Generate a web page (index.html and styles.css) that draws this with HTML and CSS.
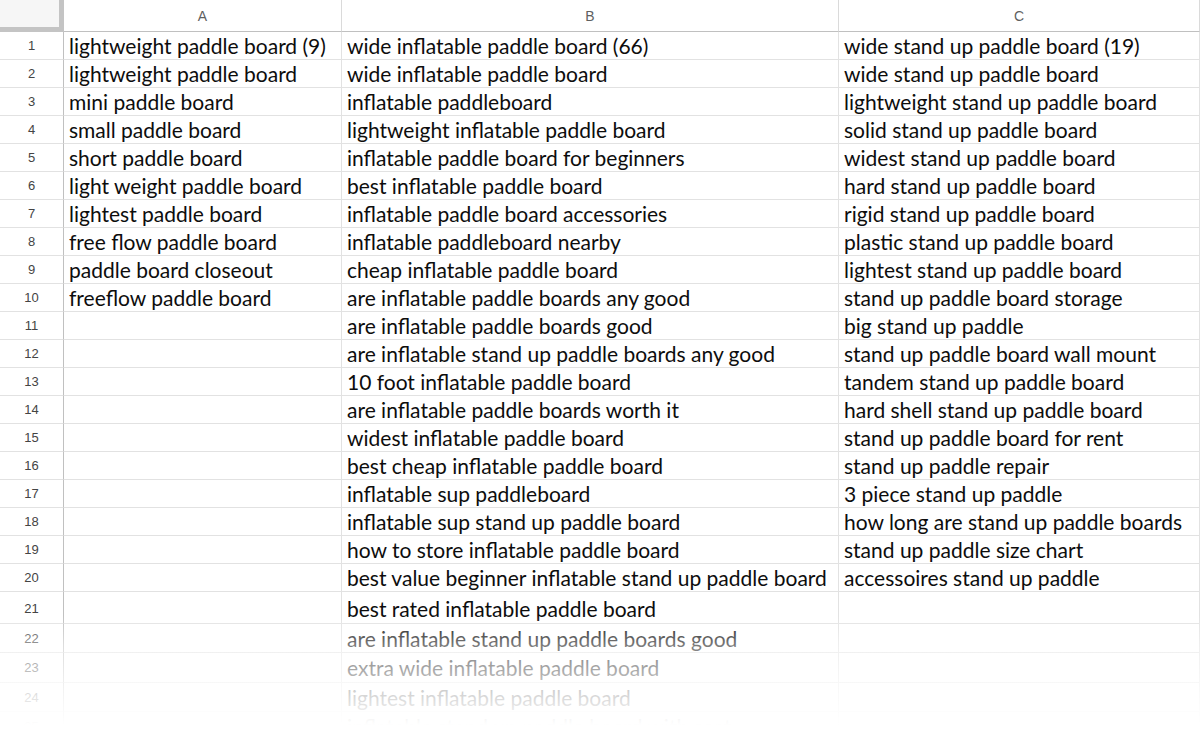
FILE: index.html
```html
<!DOCTYPE html>
<html>
<head>
<meta charset="utf-8">
<link rel="stylesheet" href="styles.css">
</head>
<body>
<div class="sheet">
<table class="grid">
<colgroup><col class="c-num"><col class="c-a"><col class="c-b"><col class="c-c"></colgroup>
<thead>
<tr class="head"><th class="corner"></th><th>A</th><th>B</th><th>C</th></tr>
</thead>
<tbody>
<tr><td class="num">1</td><td>lightweight paddle board (9)</td><td>wide inflatable paddle board (66)</td><td>wide stand up paddle board (19)</td></tr>
<tr><td class="num">2</td><td>lightweight paddle board</td><td>wide inflatable paddle board</td><td>wide stand up paddle board</td></tr>
<tr><td class="num">3</td><td>mini paddle board</td><td>inflatable paddleboard</td><td>lightweight stand up paddle board</td></tr>
<tr><td class="num">4</td><td>small paddle board</td><td>lightweight inflatable paddle board</td><td>solid stand up paddle board</td></tr>
<tr><td class="num">5</td><td>short paddle board</td><td>inflatable paddle board for beginners</td><td>widest stand up paddle board</td></tr>
<tr><td class="num">6</td><td>light weight paddle board</td><td>best inflatable paddle board</td><td>hard stand up paddle board</td></tr>
<tr><td class="num">7</td><td>lightest paddle board</td><td>inflatable paddle board accessories</td><td>rigid stand up paddle board</td></tr>
<tr><td class="num">8</td><td>free flow paddle board</td><td>inflatable paddleboard nearby</td><td>plastic stand up paddle board</td></tr>
<tr><td class="num">9</td><td>paddle board closeout</td><td>cheap inflatable paddle board</td><td>lightest stand up paddle board</td></tr>
<tr><td class="num">10</td><td>freeflow paddle board</td><td>are inflatable paddle boards any good</td><td>stand up paddle board storage</td></tr>
<tr><td class="num">11</td><td></td><td>are inflatable paddle boards good</td><td>big stand up paddle</td></tr>
<tr><td class="num">12</td><td></td><td>are inflatable stand up paddle boards any good</td><td>stand up paddle board wall mount</td></tr>
<tr><td class="num">13</td><td></td><td>10 foot inflatable paddle board</td><td>tandem stand up paddle board</td></tr>
<tr><td class="num">14</td><td></td><td>are inflatable paddle boards worth it</td><td>hard shell stand up paddle board</td></tr>
<tr><td class="num">15</td><td></td><td>widest inflatable paddle board</td><td>stand up paddle board for rent</td></tr>
<tr><td class="num">16</td><td></td><td>best cheap inflatable paddle board</td><td>stand up paddle repair</td></tr>
<tr><td class="num">17</td><td></td><td>inflatable sup paddleboard</td><td>3 piece stand up paddle</td></tr>
<tr><td class="num">18</td><td></td><td>inflatable sup stand up paddle board</td><td>how long are stand up paddle boards</td></tr>
<tr><td class="num">19</td><td></td><td>how to store inflatable paddle board</td><td>stand up paddle size chart</td></tr>
<tr><td class="num">20</td><td></td><td>best value beginner inflatable stand up paddle board</td><td>accessoires stand up paddle</td></tr>
<tr class="tall first"><td class="num">21</td><td></td><td>best rated inflatable paddle board</td><td></td></tr>
<tr class="tall"><td class="num">22</td><td></td><td>are inflatable stand up paddle boards good</td><td></td></tr>
<tr class="tall"><td class="num">23</td><td></td><td>extra wide inflatable paddle board</td><td></td></tr>
<tr class="tall"><td class="num">24</td><td></td><td>lightest inflatable paddle board</td><td></td></tr>
<tr class="tall"><td class="num">25</td><td></td><td>inflatable stand up paddle board with seat</td><td></td></tr>
</tbody>
</table>
<div class="fade"></div>
</div>
</body>
</html>
```

FILE: styles.css
```css
html, body {
  margin: 0;
  padding: 0;
  background: #ffffff;
}
.sheet {
  position: relative;
  width: 1200px;
  height: 741px;
  overflow: hidden;
}
.grid {
  border-collapse: separate;
  border-spacing: 0;
  table-layout: fixed;
  width: 1200px;
}
.c-num { width: 64px; }
.c-a { width: 278px; }
.c-b { width: 497px; }
.c-c { width: 361px; }
.head th {
  height: 31px;
  padding: 0;
  font-family: "Liberation Sans", Arial, sans-serif;
  font-weight: normal;
  font-size: 14px;
  color: #5f5f5f;
  text-align: center;
  vertical-align: middle;
  background: #ffffff;
  border-right: 1px solid #dadada;
  border-bottom: 1px solid #c0c0c0;
}
.head th.corner {
  background: #f6f6f6;
  border-right: 5px solid #c4c4c4;
  border-bottom: 5px solid #c4c4c4;
  height: 27px;
}
td {
  height: 26px;
  padding: 1px 0 0 5px;
  font-family: "Lato", "Open Sans", sans-serif;
  font-size: 21px;
  line-height: 26px;
  color: #0d0d0d;
  white-space: nowrap;
  overflow: hidden;
  vertical-align: middle;
  border-right: 1px solid #e2e2e2;
  border-bottom: 1px solid #e2e2e2;
}
td.num {
  padding: 1px 0 0 0;
  text-align: center;
  font-family: "Liberation Sans", Arial, sans-serif;
  font-size: 13px;
  color: #444444;
  border-right: 1px solid #c0c0c0;
}
tr.tall td {
  height: 27.5px;
  line-height: 27.5px;
}
tr.tall.first td {
  padding-top: 3px;
  height: 27.5px;
  line-height: 26.5px;
}
.fade {
  position: absolute;
  left: 0;
  right: 0;
  top: 615px;
  height: 126px;
  background: linear-gradient(to bottom, rgba(255,255,255,0) 0px, rgba(255,255,255,0.45) 30px, rgba(255,255,255,0.8) 75px, #ffffff 110px);
  pointer-events: none;
}
```
